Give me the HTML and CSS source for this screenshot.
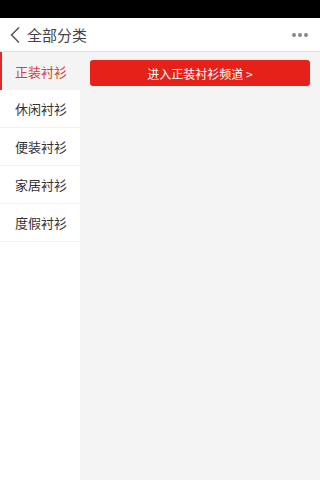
FILE: index.html
```html
<!DOCTYPE html>
<html lang="zh">
<head>
<meta charset="utf-8">
<link rel="stylesheet" href="styles.css">
</head>
<body>
<div class="app">
  <div class="status"></div>
  <header class="header">
    <div class="left">
      <svg class="back" width="12" height="18" viewBox="0 0 12 18"><path d="M10 1.5 L2.5 9 L10 16.5" fill="none" stroke="#555" stroke-width="1.5"/></svg>
      <span class="title">全部分类</span>
    </div>
    <div class="dots"><i></i><i></i><i></i></div>
  </header>
  <div class="main">
    <nav class="side">
      <div class="item active">正装衬衫</div>
      <div class="item">休闲衬衫</div>
      <div class="item">便装衬衫</div>
      <div class="item">家居衬衫</div>
      <div class="item">度假衬衫</div>
    </nav>
    <section class="content">
      <div class="btn">进入正装衬衫频道&nbsp;&gt;</div>
    </section>
  </div>
</div>
</body>
</html>
```
FILE: styles.css
```css
* { box-sizing: border-box; margin: 0; padding: 0; }
html, body { width: 320px; height: 480px; overflow: hidden; }
body { font-family: "Noto Sans CJK SC", "Liberation Sans", sans-serif; background: #f4f4f4; }
.app { display: flex; flex-direction: column; height: 480px; }
.status { height: 18px; background: #000; flex: none; }
.header { height: 34px; flex: none; background: #fff; border-bottom: 1px solid #e0e0e0; display: flex; align-items: center; justify-content: space-between; padding: 0 12px 0 9px; }
.left { display: flex; align-items: center; }
.back { display: block; margin-right: 6px; }
.title { font-size: 15px; color: #444; line-height: 1; }
.dots { display: flex; gap: 2px; }
.dots i { width: 4px; height: 4px; border-radius: 50%; background: #888; display: block; }
.main { flex: 1; display: flex; }
.side { width: 80px; background: #fff; flex: none; }
.item { height: 38px; display: flex; align-items: center; padding-left: 15px; font-size: 13px; color: #333; border-bottom: 1px solid #f2f2f2; }
.item.active { background: #f4f4f4; color: #d4433e; border-left: 2px solid #e02b25; padding-left: 13px; border-bottom: none; }
.content { flex: 1; padding: 8px 10px 0 10px; }
.btn { height: 26px; background: #e5211a; border-radius: 3px; color: #fff; font-size: 12px; display: flex; align-items: center; justify-content: center; }
```
